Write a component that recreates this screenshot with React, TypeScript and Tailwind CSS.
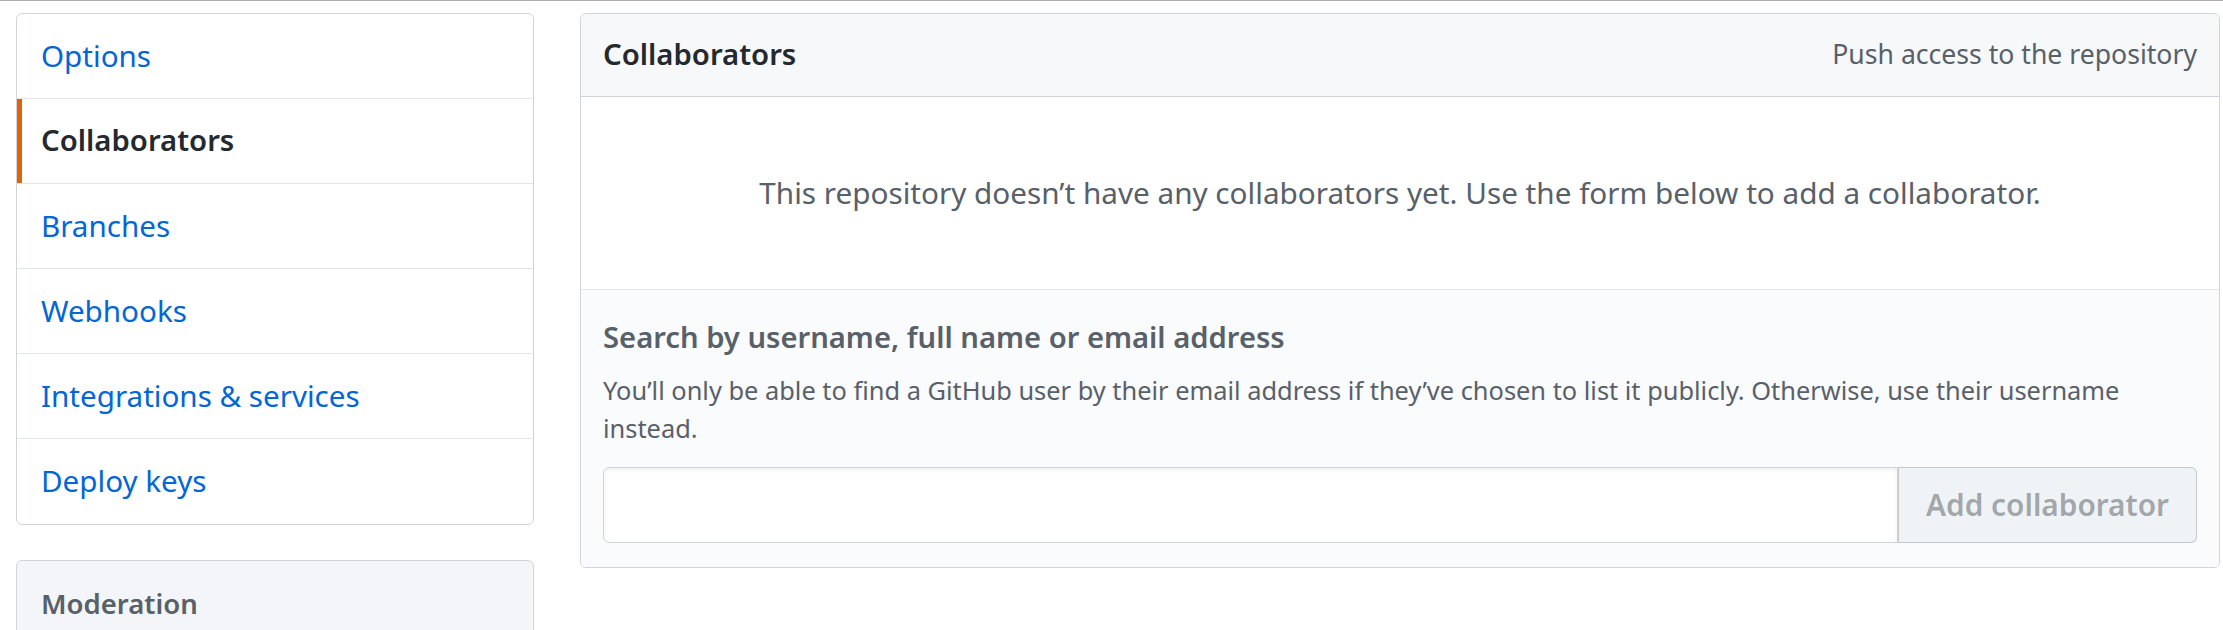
import React from "react";

const menu = [
  { label: "Options" },
  { label: "Collaborators", selected: true },
  { label: "Branches" },
  { label: "Webhooks" },
  { label: "Integrations & services" },
  { label: "Deploy keys" },
];

function SettingsMenu() {
  return (
    <nav className="overflow-hidden rounded-[6px] border border-[#d1d5da] bg-white">
      {menu.map((item, i) => (
        <a
          key={item.label}
          href="#"
          className={`relative flex h-[85px] items-center pl-[24px] ${
            i < menu.length - 1 ? "border-b border-[#e1e4e8]" : "h-[84px]"
          } ${
            item.selected
              ? "text-[29.3px] font-semibold text-[#24292e]"
              : "text-[29.6px] text-[#0366d6]"
          }`}
        >
          {item.selected ? (
            <span className="absolute top-0 bottom-0 left-0 w-[5px] bg-[#e36209]" />
          ) : null}
          {item.label}
        </a>
      ))}
    </nav>
  );
}

function CollaboratorsBox() {
  return (
    <section className="w-[1640px] shrink-0 overflow-hidden rounded-[6px] border border-[#d1d5da]">
      <header className="flex h-[83px] items-center justify-between border-b border-[#d1d5da] bg-[#f6f8fa] px-[22px]">
        <h3 className="text-[29.3px] font-semibold text-[#24292e]">Collaborators</h3>
        <span className="text-[26.6px] text-[#586069]">Push access to the repository</span>
      </header>
      <div className="flex h-[193px] items-center justify-center border-b border-[#e1e4e8] bg-white">
        <p className="text-[29.7px] text-[#586069]">
          This repository doesn’t have any collaborators yet. Use the form below to add a collaborator.
        </p>
      </div>
      <form className="bg-[#fafbfc] px-[22px] pt-[25px] pb-[24px]">
        <h4 className="text-[29.2px] leading-[45px] font-semibold text-[#586069]">
          Search by username, full name or email address
        </h4>
        <p className="mt-[11px] text-[25.4px] leading-[38px] text-[#586069]">
          You’ll only be able to find a GitHub user by their email address if they’ve chosen to list it publicly.
          Otherwise, use their username instead.
        </p>
        <div className="mt-[20px] flex h-[76px]">
          <input
            type="text"
            aria-label="Search by username, full name or email address"
            className="min-w-0 flex-1 rounded-l-[6px] border border-[#d1d5da] bg-white px-4 text-[29px] shadow-[inset_0_2px_4px_rgba(27,31,35,0.075)] outline-none"
          />
          <button
            type="button"
            disabled
            className="w-[299px] rounded-r-[6px] border border-[rgba(27,31,35,0.2)] bg-[#eff3f6] text-[29.8px] font-semibold text-[rgba(36,41,46,0.4)]"
          >
            Add collaborator
          </button>
        </div>
      </form>
    </section>
  );
}

export default function App() {
  return (
    <div className="h-[630px] w-[2223px] overflow-hidden border-t border-[#acacac] bg-white font-['Noto_Sans',sans-serif]">
      <div className="flex items-start gap-[46px] pt-3 pl-4">
        <aside className="w-[518px] shrink-0">
          <SettingsMenu />
          <div className="mt-[35px] rounded-[6px] border border-[#d1d5da] bg-[#f3f5f8]">
            <div className="flex h-[85px] items-center pl-[24px] text-[27.5px] font-semibold text-[#586069]">
              Moderation
            </div>
          </div>
        </aside>
        <CollaboratorsBox />
      </div>
    </div>
  );
}
